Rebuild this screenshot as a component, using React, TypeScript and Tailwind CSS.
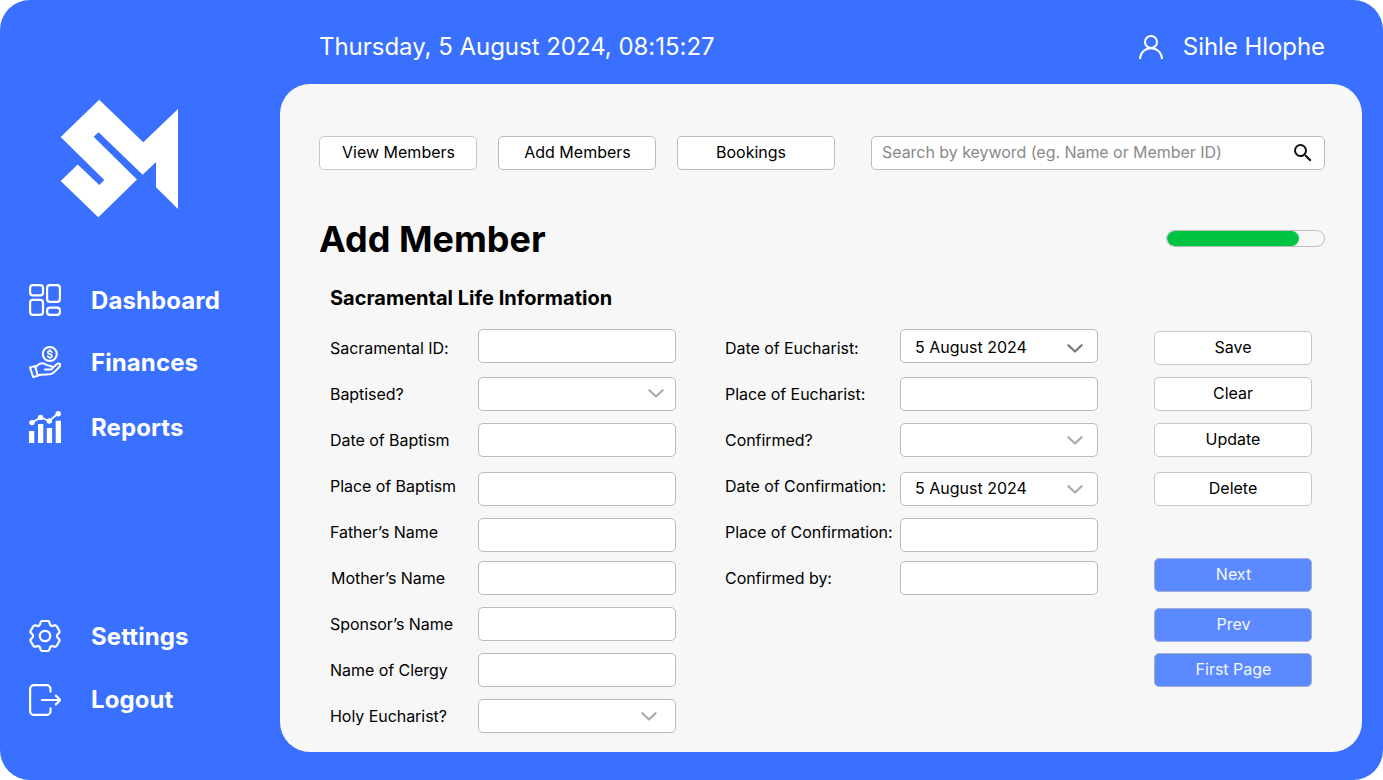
import React from "react";
import { MdSearch } from "react-icons/md";

const line = {
  fill: "none",
  stroke: "currentColor",
  strokeWidth: 2,
  strokeLinecap: "round" as const,
  strokeLinejoin: "round" as const,
};

function Logo() {
  return (
    <svg className="h-[118px] w-[118px]" viewBox="60 99 118 118" fill="#fff">
      <path d="M99.2 99.8 143.3 142.2 178 109v100l-22-21.7V162l-13.3 12.7L98.6 132.2l-5 4.5L137 179.4 98.3 217.3 60.7 181l17-16.4L99.3 185l5-5L60.7 137Z" />
    </svg>
  );
}

function DashboardIcon() {
  return (
    <svg className="size-8" viewBox="0 0 32 32" {...line} strokeWidth={2.2}>
      <rect x="1.1" y="1.1" width="12.9" height="10.300" rx="2.800" />
      <rect x="18.100" y="1.1" width="12.8" height="16.800" rx="2.800" />
      <rect x="1.1" y="15.800" width="12.9" height="15.100" rx="2.800" />
      <rect x="18.100" y="23.700" width="12.8" height="7.200" rx="2.800" />
    </svg>
  );
}

function FinancesIcon() {
  return (
    <svg className="size-8" viewBox="0 0 32 32" {...line}>
      <circle cx="20.8" cy="8" r="7" />
      <path
        d="M22.9 6.3c-.3-.9-1-1.3-2-1.3-1.200 0-2.100.6-2.100 1.600 0 2.100 4.200 1 4.200 3.100 0 1-.9 1.700-2.100 1.700-1.100 0-1.900-.5-2.200-1.400M20.9 3.900v1M20.9 11.400v1"
        strokeWidth="1.600"
      />
      <path d="M1 21.400 6 20.100 8.900 29.900 4.100 31Z" />
      <path d="M6.300 21.200C8.300 20 9.300 17.200 13 17.200c3.500 0 4 2.500 7.500 2.600 2.200.1 3.100 1 3 2.300-.2 1.100-1.100 1.500-2.500 1.500l-5.100-.2" />
      <path d="M23.400 21.400c2.300-.6 3.800-3.700 6-3.900 1.800-.1 2.500 1.500 1.300 2.800-1.800 2.100-5.200 6.300-8.400 7.600-2.600.9-7.500.1-13.600 1.300" />
    </svg>
  );
}

function ReportsIcon() {
  return (
    <svg className="size-8" viewBox="0 0 32 32" fill="currentColor">
      <path d="M0 20h5.300v12H0zM9 13h5.300v19H9zM17.800 17h5.300v15h-5.300zM26.700 9.700H32V32h-5.300z" />
      <path d="M3 11.600 11.600 6.400 20.300 10 29 2.500" fill="none" stroke="currentColor" strokeWidth="1.800" />
      <circle cx="3" cy="11.600" r="2.700" />
      <circle cx="11.600" cy="6.400" r="2.700" />
      <circle cx="20.300" cy="10" r="2.700" />
      <circle cx="29.200" cy="2.700" r="2.700" />
    </svg>
  );
}

/* One tooth of the cog, repeated every 60 degrees around the centre. */
const TOOTH: [string, number, number][] = [
  ["L", -6.2, -10.200],
  ["Q", -4.900, -11],
  ["", -4.700, -12.300],
  ["L", -4.500, -13.400],
  ["Q", -4.200, -15],
  ["", -2.600, -15],
  ["L", 2.600, -15],
  ["Q", 4.200, -15],
  ["", 4.500, -13.400],
  ["L", 4.700, -12.300],
  ["Q", 4.900, -11],
  ["", 6.200, -10.200],
];

const COG = [0, 1, 2, 3, 4, 5]
  .map((k) => {
    const c = Math.cos((k * Math.PI) / 3);
    const s = Math.sin((k * Math.PI) / 3);
    return TOOTH.map(([cmd, x, y], i) => {
      const px = (16 + x * c - y * s).toFixed(2);
      const py = (16 + x * s + y * c).toFixed(2);
      return `${k === 0 && i === 0 ? "M" : cmd}${px} ${py}`;
    }).join(" ");
  })
  .join(" ");

function SettingsIcon() {
  return (
    <svg className="size-8" viewBox="0 0 32 32" {...line} strokeWidth={2.2}>
      <path d={COG + "Z"} />
      <circle cx="16" cy="16" r="5.200" />
    </svg>
  );
}

function LogoutIcon() {
  return (
    <svg className="size-8" viewBox="0 0 32 32" {...line} strokeWidth={2.2}>
      <path d="M21.500 7.700V5.100c0-2.200-1.800-4-4-4H5.100c-2.200 0-4 1.800-4 4v21.800c0 2.200 1.800 4 4 4h12.400c2.200 0 4-1.800 4-4v-2.600" />
      <path d="M12.900 16h18M26.900 11.600l3.500 3.500q.9.900 0 1.800l-3.500 3.500" />
    </svg>
  );
}

function UserIcon() {
  return (
    <svg className="size-6" viewBox="0 0 24 24" fill="none" stroke="currentColor" strokeWidth="2">
      <circle cx="12" cy="7" r="6" />
      <path d="M1 24.200C1 17.900 5.900 13.200 12 13.200s11 4.700 11 11" />
    </svg>
  );
}

function Chevron({ className }: { className: string }) {
  return (
    <svg className={"h-[9px] w-4 shrink-0 " + className} viewBox="0 0 16 9" {...line} strokeWidth={2.2}>
      <path d="M1.400 1.200 8 7.500 14.600 1.200" />
    </svg>
  );
}

type NavItemProps = { icon: React.ReactNode; label: string; className: string; labelClass?: string };

function NavItem({ icon, label, className, labelClass = "pt-0.5" }: NavItemProps) {
  return (
    <a className={"flex h-8 items-center gap-[30px] text-2xl font-bold tracking-[0.1px] " + className}>
      {icon}
      <span className={labelClass}>{label}</span>
    </a>
  );
}

type FieldProps = {
  label: string;
  offset?: string;
  value?: string;
  valueClass?: string;
  chevron?: string;
  labelClass?: string;
};

function Field({ label, offset = "mt-1.5", value, valueClass = "", chevron, labelClass = "" }: FieldProps) {
  return (
    <div className="flex h-[46px] items-start justify-between">
      <label className={"whitespace-nowrap leading-[46px] tracking-[-0.05px] " + labelClass}>{label}</label>
      <div
        className={
          "flex h-[34px] w-[198px] shrink-0 items-center justify-between rounded-[5px] border border-[#bbb] bg-white pl-3.5 " +
          offset
        }
      >
        <span className={valueClass}>{value}</span>
        {chevron && <Chevron className={chevron} />}
      </div>
    </div>
  );
}

function Button({ children, className }: { children: string; className: string }) {
  return (
    <button
      className={
        "flex h-[34px] w-[158px] shrink-0 items-center justify-center rounded-[5px] border pb-0.5 " + className
      }
    >
      {children}
    </button>
  );
}

const plain = "border-[#c8c8c8] bg-white";
const tab = "border-[#bbb] bg-white";
const blue = "border-[#a3afd0] bg-[#5b89ff] pl-px text-[#f4f7ff]";

export default function App() {
  return (
    <div className="flex h-[780px] w-[1383px] overflow-hidden rounded-[30px] bg-[#3970ff] font-['Inter',sans-serif] text-base text-black">
      <aside className="flex w-[280px] shrink-0 flex-col pl-[29px] text-white">
        <div className="mt-[99px] ml-[31px]">
          <Logo />
        </div>
        <nav className="flex flex-col">
          <NavItem icon={<DashboardIcon />} label="Dashboard" className="mt-[67px]" />
          <NavItem icon={<FinancesIcon />} label="Finances" className="mt-[30px]" />
          <NavItem icon={<ReportsIcon />} label="Reports" className="mt-[33px]" />
          <NavItem icon={<SettingsIcon />} label="Settings" className="mt-[177px]" />
          <NavItem icon={<LogoutIcon />} label="Logout" className="mt-8" labelClass="" />
        </nav>
      </aside>

      <div className="flex w-[1082px] shrink-0 flex-col">
        <header className="flex h-[84px] items-center justify-between pr-[37px] pl-[39px] text-2xl text-white">
          <span className="mt-2.5 tracking-[-0.03px]">Thursday, 5 August 2024, 08:15:27</span>
          <span className="mt-2.5 flex items-center gap-5">
            <UserIcon />
            <span className="tracking-[-0.06px]">Sihle Hlophe</span>
          </span>
        </header>

        <main className="h-[668px] rounded-[30px] bg-[#f7f7f7] pt-[52px] pl-[39px]">
          <div className="flex">
            <Button className={plain + " pl-px"}>View Members</Button>
            <Button className={tab + " ml-[21px] pl-px"}>Add Members</Button>
            <Button className={tab + " ml-[21px] pr-2.5"}>Bookings</Button>
            <div className="ml-9 flex h-[34px] w-[454px] items-center justify-between rounded-[5px] border border-[#bbb] bg-white pr-[9px] pl-2.5">
              <span className="pb-0.5 tracking-[-0.04px] text-[#8a8a8a]">Search by keyword (eg. Name or Member ID)</span>
              <MdSearch className="size-6 text-[#111]" />
            </div>
          </div>

          <div className="mt-[45px] flex h-12 w-[1006px] items-center justify-between">
            <h1 className="text-4xl font-bold">Add Member</h1>
            <div className="mb-px h-[17px] w-[159px] overflow-hidden rounded-full border border-[#bbb]">
              <div className="h-full w-[132px] rounded-full bg-[#00c342]" />
            </div>
          </div>

          <h2 className="mt-[21px] ml-[11px] h-[28px] text-xl leading-[28px] font-bold">
            Sacramental Life Information
          </h2>

          <div className="mt-[13px] flex pl-[11px]">
            <div className="w-[346px] shrink-0">
              <Field label="Sacramental ID:" offset="mt-1" />
              <Field label="Baptised?" chevron="mr-[11px] mb-0.5 text-[#aaa]" />
              <Field label="Date of Baptism" />
              <Field label="Place of Baptism" offset="mt-[9px]" />
              <Field label="Father’s Name" offset="mt-[9px]" />
              <Field label="Mother’s Name" labelClass="pl-px" />
              <Field label="Sponsor’s Name" />
              <Field label="Name of Clergy" />
              <Field label="Holy Eucharist?" chevron="mr-[18px] mt-px text-[#aaa]" />
            </div>
            <div className="ml-[49px] w-[373px] shrink-0">
              <Field
                label="Date of Eucharist:"
                offset="mt-1"
                value="5 August 2024"
                valueClass="pt-0.5"
                chevron="mr-3.5 mt-1 text-[#777]"
              />
              <Field label="Place of Eucharist:" />
              <Field label="Confirmed?" chevron="mr-3.5 text-[#aaa]" />
              <Field
                label="Date of Confirmation:"
                offset="mt-[9px]"
                value="5 August 2024"
                valueClass="pb-0.5"
                chevron="mr-3.5 mt-px text-[#aaa]"
              />
              <Field label="Place of Confirmation:" offset="mt-[9px]" />
              <Field label="Confirmed by:" />
            </div>
            <div className="ml-14 flex flex-col pt-1.5">
              <Button className={plain}>Save</Button>
              <Button className={plain + " mt-3"}>Clear</Button>
              <Button className={plain + " mt-3"}>Update</Button>
              <Button className={plain + " mt-[15px]"}>Delete</Button>
              <Button className={blue + " mt-[52px]"}>Next</Button>
              <Button className={blue + " mt-4"}>Prev</Button>
              <Button className={blue + " mt-[11px]"}>First Page</Button>
            </div>
          </div>
        </main>
      </div>
    </div>
  );
}
